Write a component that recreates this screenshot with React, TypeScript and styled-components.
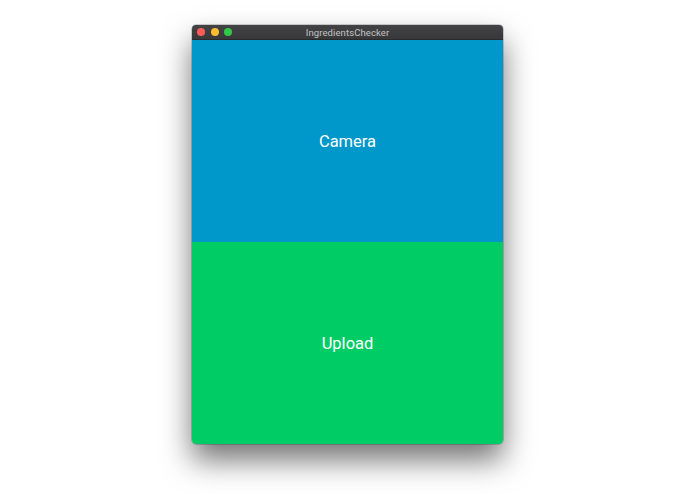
import React from 'react';
import styled, { createGlobalStyle } from 'styled-components';

const GlobalStyle = createGlobalStyle`
    html, body {
        margin: 0;
        padding: 0;
        background: #ffffff;
        font-family: Roboto, 'Liberation Sans', sans-serif;
    }
`;

const Page = styled.div`
    display: flex;
    justify-content: center;
    padding-top: 25px;
    height: 494px;
    box-sizing: border-box;
`;

const Window = styled.div`
    width: 311px;
    height: 419px;
    display: flex;
    flex-direction: column;
    border-radius: 4px;
    overflow: hidden;
    box-shadow: 0 0 0 0.5px rgba(0, 0, 0, 0.35), 0 16px 30px rgba(0, 0, 0, 0.55);
`;

const TitleBar = styled.div`
    height: 15px;
    flex: none;
    position: relative;
    display: flex;
    align-items: center;
    justify-content: center;
    background: linear-gradient(#434345, #38383a);
    border-bottom: 1px solid #2a2a2a;
    box-sizing: border-box;
`;

const Lights = styled.div`
    position: absolute;
    left: 5px;
    top: 3px;
    display: flex;
    gap: 5.5px;
`;

const Light = styled.span<{ $color: string }>`
    width: 8px;
    height: 8px;
    border-radius: 50%;
    background: ${props => props.$color};
`;

const Title = styled.span`
    font-size: 9.5px;
    color: #c2c2c4;
    letter-spacing: 0.1px;
`;

const Pane = styled.button<{ $color: string }>`
    flex: 1;
    border: none;
    margin: 0;
    padding: 0;
    display: flex;
    align-items: center;
    justify-content: center;
    background: ${props => props.$color};
    color: #ffffff;
    font-family: Roboto, 'Liberation Sans', sans-serif;
    font-size: 16.5px;
    cursor: pointer;
`;

const App = () => {
    return (
        <>
            <GlobalStyle />
            <Page>
                <Window>
                    <TitleBar>
                        <Lights>
                            <Light $color="#fc5c57" />
                            <Light $color="#fdbc2e" />
                            <Light $color="#33c748" />
                        </Lights>
                        <Title>IngredientsChecker</Title>
                    </TitleBar>
                    <Pane $color="#0097cb">Camera</Pane>
                    <Pane $color="#00cc66">Upload</Pane>
                </Window>
            </Page>
        </>
    );
};

export default App;
